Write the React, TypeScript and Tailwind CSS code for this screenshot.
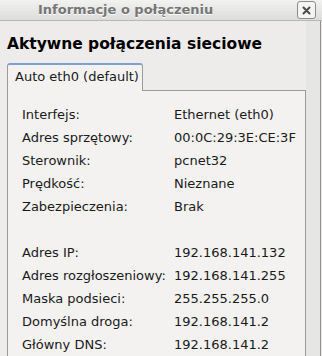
const rows: [string, string][] = [
  ['Interfejs:', 'Ethernet (eth0)'],
  ['Adres sprzętowy:', '00:0C:29:3E:CE:3F'],
  ['Sterownik:', 'pcnet32'],
  ['Prędkość:', 'Nieznane'],
  ['Zabezpieczenia:', 'Brak'],
  ['', ''],
  ['Adres IP:', '192.168.141.132'],
  ['Adres rozgłoszeniowy:', '192.168.141.255'],
  ['Maska podsieci:', '255.255.255.0'],
  ['Domyślna droga:', '192.168.141.2'],
  ['Główny DNS:', '192.168.141.2'],
];

export default function App() {
  return (
    <div
      className="w-[322px] h-[356px] overflow-hidden bg-[#edeceb] text-[#1a1a1a] flex flex-col"
      style={{ fontFamily: '"DejaVu Sans", sans-serif' }}
    >
      {/* Title bar */}
      <div className="h-[24px] flex items-center border-b border-[#b8b8b6] bg-gradient-to-b from-[#f2f2f1] to-[#dcdcda] pr-[2px]">
        <span className="pl-[38px] text-[13px] font-bold text-[#767676] [text-shadow:0_1px_0_#fff]">
          Informacje o połączeniu
        </span>
        <div className="ml-auto mr-[4px] w-[19px] h-[18px] rounded-[3px] border border-[#8c8c8c] bg-[#f4f4f3] flex items-center justify-center">
          <svg width="9" height="9" viewBox="0 0 9 9">
            <path d="M1.5 1.5 L7.5 7.5 M7.5 1.5 L1.5 7.5" stroke="#4a4a4a" strokeWidth="2" strokeLinecap="round" />
          </svg>
        </div>
      </div>

      {/* Body */}
      <div className="flex-1 flex mr-[1px] border-r border-[#8f8f8f]">
        <div className="flex-1 pl-[7px] flex flex-col">
          <div className="mt-[12px] text-[15.5px] font-bold text-black leading-[22px]">
            Aktywne połączenia sieciowe
          </div>

          <div className="mt-[8px] flex items-end">
            <div className="w-[136px] h-[28px] rounded-t-[3px] border border-b-0 border-[#9a9a98] border-t-2 border-t-[#7f9fcf] bg-[#f3f2f1] pl-[7px] text-[13px] leading-[24px] relative z-10 -mb-px">
              Auto eth0 (default)
            </div>
          </div>

          <div className="w-[299px] flex-1 border border-[#9a9a98] border-b-0 bg-[#f3f2f1] pt-[12px] pl-[14px] text-[13px]">
            {rows.map(([label, value], i) => (
              <div key={i} className="h-[23px] flex items-center">
                <span className="w-[152px] shrink-0">{label}</span>
                <span>{value}</span>
              </div>
            ))}
          </div>
        </div>
        <div className="w-[14px] bg-[#e6e6e5]" />
      </div>
    </div>
  );
}
